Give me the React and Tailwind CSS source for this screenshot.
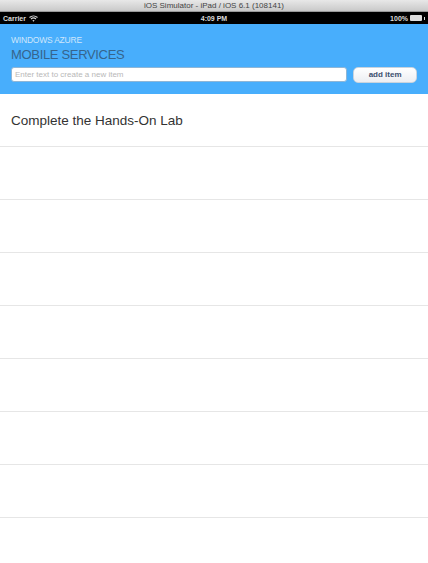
export default function App() {
  const rows = [
    'Complete the Hands-On Lab',
    '', '', '', '', '', '', '', '',
  ];

  return (
    <div
      className="w-[428px] h-[563px] overflow-hidden bg-white flex flex-col"
      style={{ fontFamily: '"Liberation Sans", Arial, sans-serif' }}
    >
      {/* simulator title bar */}
      <div className="h-[12px] shrink-0 bg-gradient-to-b from-[#e8e8e8] to-[#c9c9c9] border-b border-[#9a9a9a] flex items-center justify-center">
        <span className="text-[8px] leading-none text-[#444]">iOS Simulator - iPad / iOS 6.1 (108141)</span>
      </div>

      {/* status bar */}
      <div className="h-[12px] shrink-0 bg-black text-[#dcdcdc] grid grid-cols-3 items-center px-[3px] text-[7px] leading-none font-bold">
        <div className="flex items-center gap-[3px]">
          <span>Carrier</span>
          <svg width="9" height="7" viewBox="0 0 9 7">
            <path d="M0.5 2.5 A6 6 0 0 1 8.5 2.5" stroke="#ddd" strokeWidth="1.1" fill="none" />
            <path d="M2 4 A3.8 3.8 0 0 1 7 4" stroke="#ddd" strokeWidth="1.1" fill="none" />
            <path d="M3.4 5.6 L4.5 6.8 L5.6 5.6 A1.6 1.6 0 0 0 3.4 5.6 Z" fill="#ddd" />
          </svg>
        </div>
        <span className="text-center">4:09 PM</span>
        <div className="flex items-center justify-end gap-[2px]">
          <span>100%</span>
          <div className="w-[12px] h-[6px] bg-[#ddd] rounded-[1px]" />
          <div className="w-[1px] h-[3px] bg-[#ddd]" />
        </div>
      </div>

      {/* header */}
      <div className="h-[70px] shrink-0 bg-[#48aefc] px-[11px] pt-[12px]">
        <div className="text-[8.5px] leading-none text-[#cfe6fb] tracking-tight">WINDOWS AZURE</div>
        <div className="text-[13px] leading-none text-[#36648c] mt-[3px] tracking-tight">MOBILE SERVICES</div>
        <div className="flex items-center gap-[6px] mt-[6px]">
          <div className="w-[337px] h-[15px] bg-white rounded-[3px] border border-[#8fb6d6] flex items-center px-[3px]">
            <span className="text-[8px] leading-none text-[#b8b8b8]">Enter text to create a new item</span>
          </div>
          <div className="w-[64px] h-[16px] bg-gradient-to-b from-white to-[#eceef2] rounded-[5px] border border-[#c9d3dd] flex items-center justify-center">
            <span className="text-[8px] leading-none font-bold text-[#3b4f6e]">add item</span>
          </div>
        </div>
      </div>

      {/* list */}
      <div className="flex flex-col">
        {rows.map((t, i) => (
          <div key={i} className="h-[53px] shrink-0 border-b border-[#e6e6e6] flex items-center px-[11px]">
            <span className="text-[13.5px] text-[#333] mt-[3px]">{t}</span>
          </div>
        ))}
      </div>
    </div>
  );
}
